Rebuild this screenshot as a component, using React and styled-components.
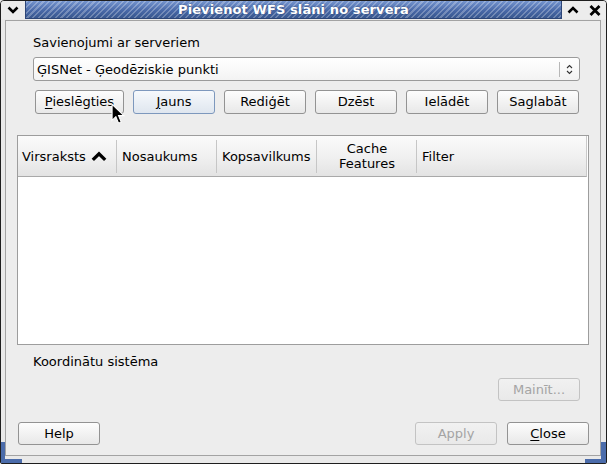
import styled, { createGlobalStyle } from "styled-components";

const GlobalStyle = createGlobalStyle`
  html, body {
    margin: 0;
    padding: 0;
    background: #ededed;
  }
  body {
    font-family: "DejaVu Sans", "Liberation Sans", sans-serif;
    font-size: 13px;
    color: #000;
  }
`;

const Window = styled.div`
  position: relative;
  width: 607px;
  height: 464px;
  box-sizing: border-box;
  border: 1px solid #1e1e1e;
  border-radius: 4px 4px 2px 2px;
  background: #e9e9e9;
  display: flex;
  flex-direction: column;
  overflow: hidden;
`;

const TitleBar = styled.div`
  height: 18px;
  display: flex;
  align-items: stretch;
`;

const TitleButton = styled.div`
  width: ${(p) => p.$w || 22}px;
  display: flex;
  align-items: center;
  justify-content: center;
  background: #ececec;
`;

const TitleStripe = styled.div`
  flex: 1;
  display: flex;
  align-items: center;
  justify-content: center;
  border: 1px solid #2c4577;
  border-top: none;
  background:
    repeating-linear-gradient(135deg, rgba(255, 255, 255, 0.26) 0 1.5px, transparent 1.5px 4px),
    linear-gradient(#7595cf, #4969a8 55%, #38578f);
  color: #fff;
  font-weight: bold;
  font-size: 13px;
  letter-spacing: 0.1px;
  text-shadow: 0 0 2px #2a4274;
`;

const Frame = styled.div`
  flex: 1;
  display: flex;
  padding: 1px 5px 7px 4px;
`;

const Content = styled.div`
  flex: 1;
  display: flex;
  flex-direction: column;
  border: 1px solid #a3a3a3;
  background: #ededed;
  padding: 14px 11px 0 11px;
`;

const Group = styled.div`
  display: flex;
  flex-direction: column;
  padding: 0 9px 0 16px;
`;

const Label = styled.div`
  line-height: 16px;
  height: 16px;
  margin-top: ${(p) => p.$mt || 0}px;
`;

const Combo = styled.div`
  margin-top: 6px;
  height: 24px;
  box-sizing: border-box;
  border: 1px solid #9b9b9b;
  border-radius: 3px;
  background: linear-gradient(#ffffff, #f3f3f3);
  display: flex;
  align-items: center;
  padding-left: 3px;
`;

const ComboText = styled.div`
  flex: 1;
`;

const ComboArrow = styled.div`
  width: 19px;
  height: 15px;
  border-left: 1px solid #b7b7b7;
  display: flex;
  align-items: center;
  justify-content: center;
`;

const ButtonRow = styled.div`
  display: flex;
  gap: 9px;
  margin-top: ${(p) => p.$mt || 0}px;
  padding-left: ${(p) => p.$pl || 0}px;
  justify-content: ${(p) => p.$justify || "flex-start"};
`;

const Button = styled.div`
  width: ${(p) => p.$w || 82}px;
  height: ${(p) => p.$h || 24}px;
  box-sizing: border-box;
  border: 1px solid ${(p) => (p.$disabled ? "#c3c3c3" : p.$focus ? "#7d98bd" : "#939393")};
  border-radius: 3px;
  background: ${(p) =>
    p.$disabled
      ? "linear-gradient(#f1f1f1, #e9e9e9)"
      : p.$focus
      ? "linear-gradient(#f6f9fc, #dfe6ef)"
      : "linear-gradient(#fdfdfd, #e8e8e8)"};
  color: ${(p) => (p.$disabled ? "#a4a4a4" : "#000")};
  display: flex;
  align-items: center;
  justify-content: center;
  line-height: 16px;
`;

const Key = styled.span`
  text-decoration: underline;
  text-underline-offset: 2px;
`;

const Table = styled.div`
  margin-top: 21px;
  height: 210px;
  box-sizing: border-box;
  border: 1px solid #9d9d9d;
  background: #fff;
  display: flex;
  flex-direction: column;
`;

const Header = styled.div`
  height: 40px;
  display: flex;
  border-bottom: 1px solid #a9a9a9;
  border-right: 1px solid #c9c9c9;
  margin-right: 1px;
  background: linear-gradient(#fbfbfb, #f1f1f1 50%, #e3e3e3);
`;

const HeadCell = styled.div`
  width: ${(p) => (p.$grow ? "auto" : "98px")};
  flex: ${(p) => (p.$grow ? 1 : "none")};
  display: flex;
  align-items: center;
  justify-content: ${(p) => (p.$center ? "center" : "flex-start")};
  text-align: ${(p) => (p.$center ? "center" : "left")};
  padding-left: ${(p) => (p.$center ? 0 : 4)}px;
  box-sizing: border-box;
  line-height: 15px;
  gap: 4px;
`;

const HeadDivider = styled.div`
  width: 1px;
  margin: 4px 1px 3px 0;
  background: #c6c6c6;
`;

const Footer = styled.div`
  display: flex;
  justify-content: space-between;
  margin-top: 21px;
  padding-left: 1px;
`;

const FooterRight = styled.div`
  display: flex;
  gap: 10px;
`;

const Corner = styled.div`
  position: absolute;
  bottom: 0;
  ${(p) => (p.$side === "left" ? "left: 0;" : "right: 0;")}
  width: 21px;
  height: 21px;
  border-bottom: 4px solid #4b6cab;
  ${(p) => (p.$side === "left" ? "border-left: 4px solid #4b6cab;" : "border-right: 5px solid #4b6cab;")}
  box-sizing: border-box;
`;

const Cursor = styled.svg`
  position: absolute;
  left: 110px;
  top: 102px;
`;

const Chevron = ({ dir = "down", w = 12, h = 8, sw = 2.6 }) => (
  <svg width={w} height={h} viewBox="0 0 12 8">
    <path
      d={dir === "down" ? "M1.5 1.5 L6 6 L10.5 1.5" : "M1.5 6.5 L6 2 L10.5 6.5"}
      fill="none"
      stroke="#000"
      strokeWidth={sw}
    />
  </svg>
);

const CloseIcon = () => (
  <svg width="12" height="11" viewBox="0 0 12 11">
    <path d="M1.5 1 L10.5 10 M10.5 1 L1.5 10" stroke="#000" strokeWidth="2.8" />
  </svg>
);

const SpinIcon = () => (
  <svg width="7" height="11" viewBox="0 0 7 11">
    <path d="M1 4 L3.5 1.5 L6 4 M1 7 L3.5 9.5 L6 7" fill="none" stroke="#333" strokeWidth="1.1" />
  </svg>
);

const App = () => {
  return (
    <>
      <GlobalStyle />
      <Window>
        <TitleBar>
          <TitleButton $w={24}>
            <Chevron dir="down" />
          </TitleButton>
          <TitleStripe>Pievienot WFS slāni no servera</TitleStripe>
          <TitleButton $w={22}>
            <Chevron dir="up" />
          </TitleButton>
          <TitleButton $w={22}>
            <CloseIcon />
          </TitleButton>
        </TitleBar>
        <Frame>
          <Content>
            <Group>
              <Label>Savienojumi ar serveriem</Label>
              <Combo>
                <ComboText>ĢISNet - Ģeodēziskie punkti</ComboText>
                <ComboArrow>
                  <SpinIcon />
                </ComboArrow>
              </Combo>
              <ButtonRow $mt={9} $pl={2}>
                <Button $w={89}>
                  <span>
                    <Key>P</Key>ieslēgties
                  </span>
                </Button>
                <Button $focus>
                  <span>
                    <Key>J</Key>auns
                  </span>
                </Button>
                <Button>Rediģēt</Button>
                <Button>Dzēst</Button>
                <Button>Ielādēt</Button>
                <Button>Saglabāt</Button>
              </ButtonRow>
            </Group>

            <Table>
              <Header>
                <HeadCell>
                  Virsraksts
                  <Chevron dir="up" w={18} h={11} sw={2.4} />
                </HeadCell>
                <HeadDivider />
                <HeadCell>Nosaukums</HeadCell>
                <HeadDivider />
                <HeadCell>Kopsavilkums</HeadCell>
                <HeadDivider />
                <HeadCell $center>
                  Cache
                  <br />
                  Features
                </HeadCell>
                <HeadDivider />
                <HeadCell $grow>Filter</HeadCell>
              </Header>
            </Table>

            <Group>
              <Label $mt={9}>Koordinātu sistēma</Label>
              <ButtonRow $mt={8} $justify="flex-end">
                <Button $disabled $h={23}>
                  Mainīt...
                </Button>
              </ButtonRow>
            </Group>

            <Footer>
              <Button $h={23}>Help</Button>
              <FooterRight>
                <Button $disabled $h={23}>
                  Apply
                </Button>
                <Button $h={23}>
                  <span>
                    <Key>C</Key>lose
                  </span>
                </Button>
              </FooterRight>
            </Footer>
          </Content>
        </Frame>
        <Corner $side="left" />
        <Corner $side="right" />
        <Cursor width="14" height="22" viewBox="0 0 13 20">
          <path
            d="M1 1 L1 16 L4.5 12.5 L7 18.5 L9.5 17.5 L7 11.5 L12 11.5 Z"
            fill="#000"
            stroke="#fff"
            strokeWidth="1"
          />
        </Cursor>
      </Window>
    </>
  );
};

export default App;
